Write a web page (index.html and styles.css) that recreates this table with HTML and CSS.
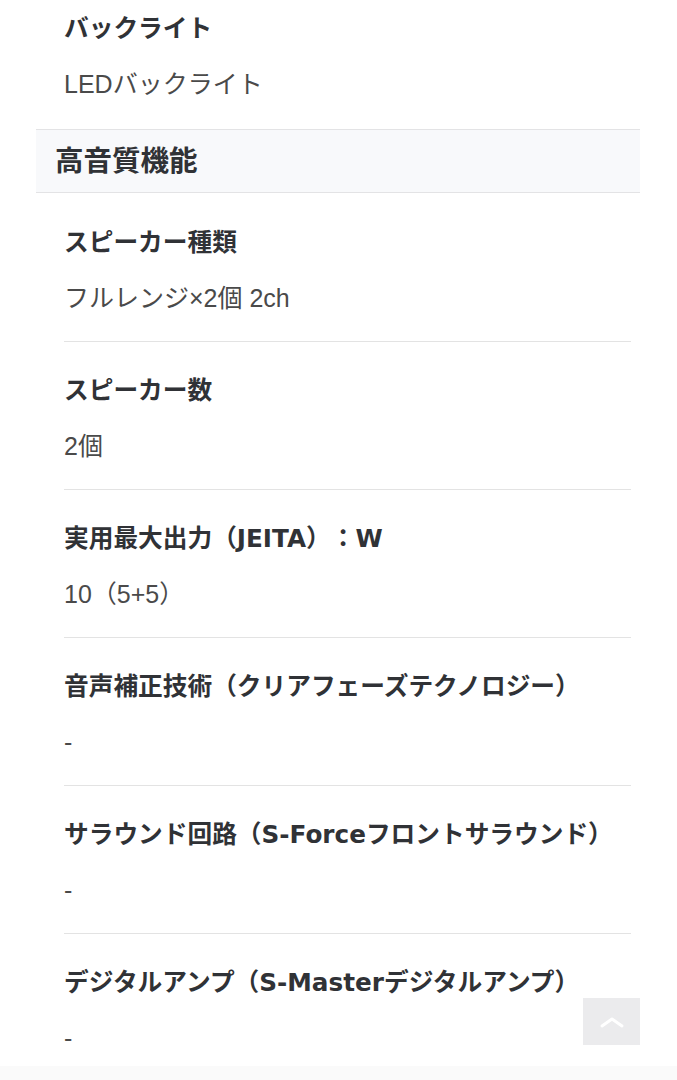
FILE: index.html
```html
<!DOCTYPE html>
<html lang="ja">
<head>
<meta charset="UTF-8">
<meta name="viewport" content="width=device-width, initial-scale=1.0">
<title>スペック</title>
<link rel="stylesheet" href="styles.css">
</head>
<body>
<div class="spec">
    <dl class="spec-list">
        <div class="spec-item">
            <dt>バックライト</dt>
            <dd>LEDバックライト</dd>
        </div>
    </dl>

    <h2 class="spec-section">高音質機能</h2>
    <dl class="spec-list">
        <div class="spec-item">
            <dt>スピーカー種類</dt>
            <dd>フルレンジ×2個 2ch</dd>
        </div>
        <div class="spec-item">
            <dt>スピーカー数</dt>
            <dd>2個</dd>
        </div>
        <div class="spec-item">
            <dt>実用最大出力（JEITA）：W</dt>
            <dd>10（5+5）</dd>
        </div>
        <div class="spec-item">
            <dt>音声補正技術（クリアフェーズテクノロジー）</dt>
            <dd>-</dd>
        </div>
        <div class="spec-item">
            <dt>サラウンド回路（S-Forceフロントサラウンド）</dt>
            <dd>-</dd>
        </div>
        <div class="spec-item">
            <dt>デジタルアンプ（S-Masterデジタルアンプ）</dt>
            <dd>-</dd>
        </div>
    </dl>
</div>

<a class="to-top" href="#">
    <svg width="26" height="14" viewBox="0 0 26 14"><path d="M3 11 L13 4 L23 11" fill="none" stroke="#fff" stroke-width="3" stroke-linecap="round" stroke-linejoin="round"/></svg>
</a>
<div class="bottom-fade"></div>
</body>
</html>
```

FILE: styles.css
```css
body {
    margin: 0;
    padding: 0;
    background: #fff;
    font-family: "Liberation Sans", "Noto Sans CJK JP", sans-serif;
    color: #333;
    text-spacing-trim: space-all;
}
.spec {
    width: 604px;
    margin: -20px 0 0 36px;
}
.spec-list {
    margin: 0;
    padding: 0 9px 0 28px;
}
.spec-item {
    padding: 31px 0 25px;
    border-bottom: 1px solid #e3e3e3;
}
.spec-item:last-child {
    border-bottom: none;
}
.spec-section + .spec-list .spec-item:first-child {
    padding-top: 32px;
}
.spec-item dt {
    font-family: "DejaVu Sans", "Noto Sans CJK JP", sans-serif;
    font-size: 24.7px;
    line-height: 36px;
    font-weight: bold;
    color: #303236;
}
.spec-item dd {
    margin: 19px 0 0;
    font-size: 25px;
    line-height: 36px;
    color: #4a4a4a;
}
.spec-section {
    margin: 2px 0 0;
    padding: 0 19px;
    height: 62px;
    line-height: 62px;
    font-size: 28.5px;
    font-weight: bold;
    color: #303236;
    background: #f8f9fb;
    border-top: 1px solid #e3e3e5;
    border-bottom: 1px solid #e3e3e5;
}
.to-top {
    position: fixed;
    left: 583px;
    top: 998px;
    width: 57px;
    height: 47px;
    background: #ebebed;
    display: flex;
    align-items: center;
    justify-content: center;
}
.bottom-fade {
    position: fixed;
    left: 0;
    right: 0;
    bottom: 0;
    height: 14px;
    background: #fafafa;
}
```
